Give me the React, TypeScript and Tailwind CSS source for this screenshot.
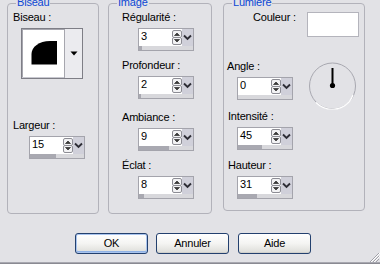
import React from "react";

function SpinArrows() {
  return (
    <svg width="10" height="17" viewBox="0 0 10 17" className="block shrink-0">
      <rect x="0.5" y="1.5" width="9" height="7" rx="1.5" fill="#f2f2f4" stroke="#8c8c94" />
      <path d="M2.5 6.5 L5 4 L7.5 6.5 Z" fill="#3a3a3a" stroke="#3a3a3a" strokeWidth="0.8" strokeLinejoin="round" />
      <rect x="0.5" y="8.5" width="9" height="7" rx="1.5" fill="#f2f2f4" stroke="#8c8c94" />
      <path d="M2.5 10.5 L5 13 L7.5 10.5 Z" fill="#3a3a3a" stroke="#3a3a3a" strokeWidth="0.8" strokeLinejoin="round" />
    </svg>
  );
}

function Spin({ value, fill }: { value: string; fill: number }) {
  return (
    <div className="w-[56px] h-[23px] border border-[#a4a4ac] bg-white flex flex-col">
      <div className="flex h-[17px]">
        <div className="flex-1 pl-[2px] text-[11px] leading-[14px] text-black">{value}</div>
        <SpinArrows />
        <div className="w-[11px] h-full bg-[#d0d0da] flex items-center justify-center">
          <svg width="11" height="17" viewBox="0 0 11 17" className="block">
            <path d="M2 6.5 L5.5 10 L9 6.5" fill="none" stroke="#2e2e36" strokeWidth="1.9" />
          </svg>
        </div>
      </div>
      <div className="h-[4px] bg-[#d8d8dc] flex">
        <div className="h-full bg-[#a9a9b1]" style={{ width: fill }} />
      </div>
    </div>
  );
}

function Label({ children, className = "" }: { children: React.ReactNode; className?: string }) {
  return <div className={`text-[11px] leading-[13px] text-black whitespace-nowrap ${className}`}>{children}</div>;
}

function Group({
  label,
  className,
  children,
}: {
  label: string;
  className: string;
  children: React.ReactNode;
}) {
  return (
    <div className={`relative border border-[#b2b2ba] rounded-[4px] flex flex-col shrink-0 ${className}`}>
      <span className="absolute left-[8px] top-[-8px] px-[1px] bg-[#e2e2e6] text-[#0b47d4] text-[11px] leading-[13px]">
        {label}
      </span>
      {children}
    </div>
  );
}

function BevelPicker() {
  return (
    <div className="w-[62px] h-[51px] border border-[#7e7e86] flex bg-[#c8c8d0]">
      <div className="w-[42px] h-[48px] border-t border-l border-[#a6a6ae] bg-white">
        <svg width="41" height="47" viewBox="0 0 41 47" className="block">
          <path d="M8.5 34.5 L8.5 24 C8.5 17 16 11 27 11 L34 11 L34 34.5 Z" fill="#000" />
        </svg>
      </div>
      <div className="w-[18px] h-[49px] bg-[#ebebef] border-l border-[#a6a6ae] flex items-center justify-center">
        <svg width="8" height="5" viewBox="0 0 8 5" className="block">
          <path d="M0.5 0.5 L7.5 0.5 L4 4.5 Z" fill="#000" />
        </svg>
      </div>
    </div>
  );
}

function Dial() {
  return (
    <svg width="48" height="48" viewBox="0 0 48 48" className="block">
      <circle cx="23.5" cy="24" r="23" fill="none" stroke="#a8a8b0" strokeWidth="1" />
      <path d="M40 40 A23 23 0 0 1 7 40.5" fill="none" stroke="#ffffff" strokeWidth="1.2" />
      <path d="M44 33 A23 23 0 0 1 40 40" fill="none" stroke="#ffffff" strokeWidth="1.2" />
      <line x1="23.5" y1="6" x2="23.5" y2="23" stroke="#000" strokeWidth="2" />
      <circle cx="23.5" cy="23.5" r="2.6" fill="#000" />
    </svg>
  );
}

function Btn({ children, def = false, className = "" }: { children: React.ReactNode; def?: boolean; className?: string }) {
  return (
    <div
      className={`w-[73px] h-[21px] rounded-[3px] border border-[#23406e] bg-linear-to-b from-[#ffffff] via-[#f4f4f2] to-[#dcdcd8] flex items-center justify-center text-[11px] leading-[13px] text-black ${
        def ? "shadow-[inset_0_0_0_1px_#a9c4ee,inset_0_-1px_0_1px_#8fb2e6]" : "shadow-[inset_0_-1px_0_#d0d0cc]"
      } ${className}`}
    >
      {children}
    </div>
  );
}

export default function App() {
  return (
    <div className="w-[380px] h-[264px] bg-[#e2e2e6] overflow-hidden relative flex flex-col font-['Liberation_Sans',Arial,sans-serif] tracking-[-0.2px]">
      <div className="flex pt-[3px] pl-[7px]">
        <Group label="Biseau" className="w-[92px] h-[211px]">
          <Label className="mt-[7px] ml-[5px]">Biseau :</Label>
          <div className="mt-[4px] ml-[13px]">
            <BevelPicker />
          </div>
          <Label className="mt-[40px] ml-[5px]">Largeur :</Label>
          <div className="mt-[4px] ml-[21px]">
            <Spin value="15" fill={26} />
          </div>
        </Group>

        <Group label="Image" className="ml-[9px] w-[104px] h-[211px]">
          <Label className="mt-[7px] ml-[13px]">Régularité :</Label>
          <div className="mt-[4px] ml-[29px]">
            <Spin value="3" fill={3} />
          </div>
          <Label className="mt-[8px] ml-[13px]">Profondeur :</Label>
          <div className="mt-[4px] ml-[29px]">
            <Spin value="2" fill={2} />
          </div>
          <Label className="mt-[12px] ml-[13px]">Ambiance :</Label>
          <div className="mt-[4px] ml-[29px]">
            <Spin value="9" fill={30} />
          </div>
          <Label className="mt-[8px] ml-[13px]">Éclat :</Label>
          <div className="mt-[4px] ml-[29px]">
            <Spin value="8" fill={5} />
          </div>
        </Group>

        <Group label="Lumière" className="ml-[11px] w-[142px] h-[208px]">
          <div className="flex items-start mt-[7px]">
            <Label className="ml-[29px]">Couleur :</Label>
            <div className="ml-auto mr-[5px] mt-[1px] w-[52px] h-[25px] bg-white border border-[#b4b4bc]" />
          </div>
          <div className="flex items-start mt-[23px]">
            <div className="flex flex-col">
              <Label className="ml-[3px]">Angle :</Label>
              <div className="mt-[4px] ml-[13px]">
                <Spin value="0" fill={0} />
              </div>
            </div>
            <div className="ml-auto mr-[7px] mt-[2px]">
              <Dial />
            </div>
          </div>
          <Label className="mt-0 ml-[4px]">Intensité :</Label>
          <div className="mt-[4px] ml-[13px]">
            <Spin value="45" fill={24} />
          </div>
          <Label className="mt-[9px] ml-[4px]">Hauteur :</Label>
          <div className="mt-[4px] ml-[13px]">
            <Spin value="31" fill={19} />
          </div>
        </Group>
      </div>

      <div className="flex mt-[19px] pl-[75px]">
        <Btn def>OK</Btn>
        <Btn className="ml-[8px]">Annuler</Btn>
        <Btn className="ml-[9px] w-[72px]">Aide</Btn>
      </div>

      <div className="flex-1" />
      <div className="h-[2px] bg-[#8a8a92] border-t border-[#a8a8b0]" />

      <svg width="12" height="12" viewBox="0 0 12 12" className="absolute right-0 bottom-[1px]">
        <line x1="11" y1="2" x2="2" y2="11" stroke="#a0a0a8" strokeWidth="1" />
        <line x1="11" y1="5" x2="5" y2="11" stroke="#a0a0a8" strokeWidth="1" />
        <line x1="11" y1="8" x2="8" y2="11" stroke="#a0a0a8" strokeWidth="1" />
        <line x1="12" y1="2" x2="3" y2="11" stroke="#ffffff" strokeWidth="1" />
        <line x1="12" y1="5" x2="6" y2="11" stroke="#ffffff" strokeWidth="1" />
      </svg>
    </div>
  );
}
